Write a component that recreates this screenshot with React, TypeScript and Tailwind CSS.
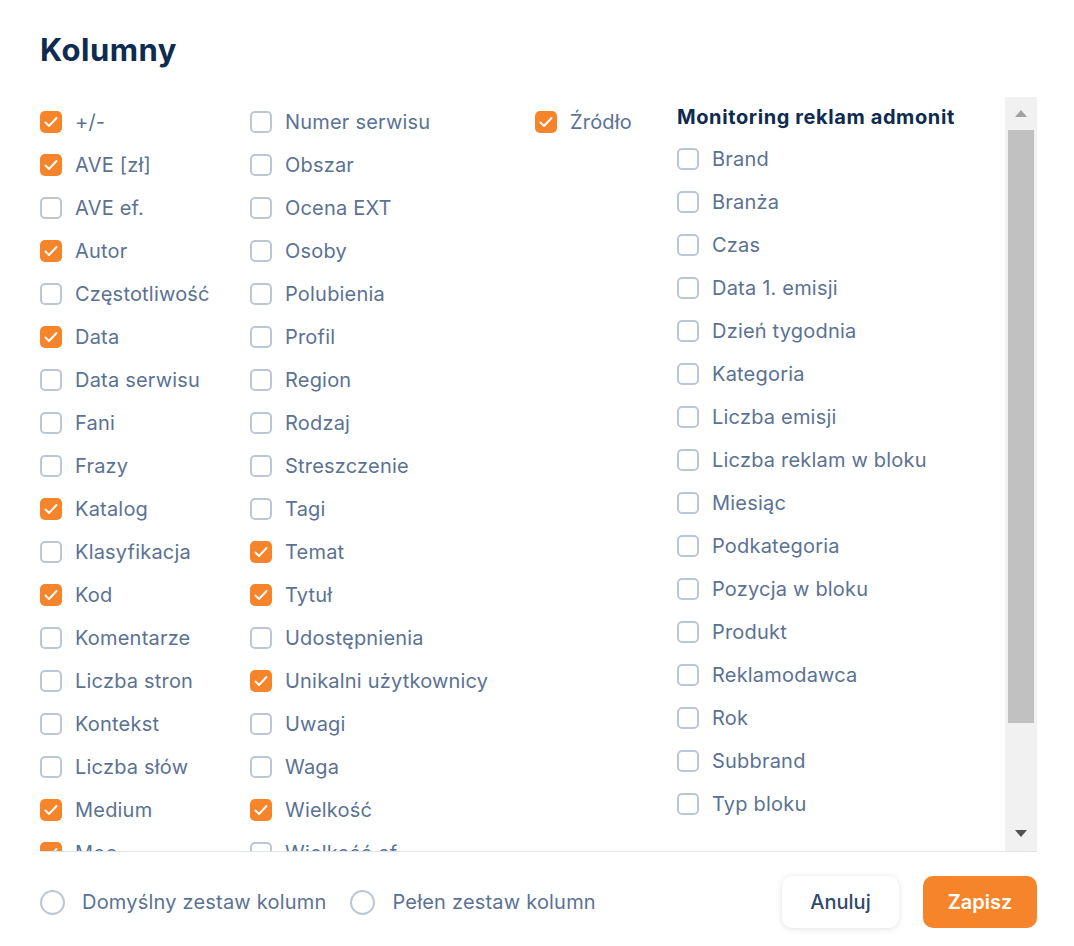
import React from 'react';

type Item = { label: string; checked?: boolean };

const col1: Item[] = [
  { label: '+/-', checked: true },
  { label: 'AVE [zł]', checked: true },
  { label: 'AVE ef.' },
  { label: 'Autor', checked: true },
  { label: 'Częstotliwość' },
  { label: 'Data', checked: true },
  { label: 'Data serwisu' },
  { label: 'Fani' },
  { label: 'Frazy' },
  { label: 'Katalog', checked: true },
  { label: 'Klasyfikacja' },
  { label: 'Kod', checked: true },
  { label: 'Komentarze' },
  { label: 'Liczba stron' },
  { label: 'Kontekst' },
  { label: 'Liczba słów' },
  { label: 'Medium', checked: true },
  { label: 'Moc', checked: true },
  { label: 'Nakład' },
];

const col2: Item[] = [
  { label: 'Numer serwisu' },
  { label: 'Obszar' },
  { label: 'Ocena EXT' },
  { label: 'Osoby' },
  { label: 'Polubienia' },
  { label: 'Profil' },
  { label: 'Region' },
  { label: 'Rodzaj' },
  { label: 'Streszczenie' },
  { label: 'Tagi' },
  { label: 'Temat', checked: true },
  { label: 'Tytuł', checked: true },
  { label: 'Udostępnienia' },
  { label: 'Unikalni użytkownicy', checked: true },
  { label: 'Uwagi' },
  { label: 'Waga' },
  { label: 'Wielkość', checked: true },
  { label: 'Wielkość ef.' },
];

const col3: Item[] = [{ label: 'Źródło', checked: true }];

const col4: Item[] = [
  'Brand',
  'Branża',
  'Czas',
  'Data 1. emisji',
  'Dzień tygodnia',
  'Kategoria',
  'Liczba emisji',
  'Liczba reklam w bloku',
  'Miesiąc',
  'Podkategoria',
  'Pozycja w bloku',
  'Produkt',
  'Reklamodawca',
  'Rok',
  'Subbrand',
  'Typ bloku',
].map((label) => ({ label }));

function Checkbox({ checked }: { checked?: boolean }) {
  if (checked) {
    return (
      <span className="flex h-[22px] w-[22px] shrink-0 items-center justify-center rounded-[5px] bg-[#f5842a]">
        <svg width="16" height="16" viewBox="0 0 16 16" fill="none">
          <polyline points="2.5,8.5 6,12 13.5,4" stroke="white" strokeWidth="1.9" strokeLinecap="round" strokeLinejoin="round" />
        </svg>
      </span>
    );
  }
  return <span className="h-[22px] w-[22px] shrink-0 rounded-[5px] border-2 border-[#bcc7d6] bg-white" />;
}

function Row({ item }: { item: Item }) {
  return (
    <div className="flex h-[43px] items-center gap-[13px]">
      <Checkbox checked={item.checked} />
      <span className="whitespace-nowrap text-[20px] tracking-[0.2px] text-[#5b7292]">{item.label}</span>
    </div>
  );
}

function Scrollbar() {
  return (
    <div className="flex w-[32px] shrink-0 flex-col bg-[#f1f1f1]">
      <div className="flex h-[33px] items-center justify-center">
        <svg width="12" height="7" viewBox="0 0 12 7">
          <polygon points="0,7 6,0 12,7" fill="#a3a3a3" />
        </svg>
      </div>
      <div className="mx-[3px] h-[593px] bg-[#c1c1c1]" />
      <div className="flex-1" />
      <div className="flex h-[36px] items-center justify-center">
        <svg width="12" height="7" viewBox="0 0 12 7">
          <polygon points="0,0 12,0 6,7" fill="#505050" />
        </svg>
      </div>
    </div>
  );
}

function Radio({ label }: { label: string }) {
  return (
    <div className="flex items-center gap-[17px]">
      <span className="h-[25px] w-[25px] shrink-0 rounded-full border-2 border-[#bcc7d6]" />
      <span className="whitespace-nowrap text-[20px] tracking-[0.2px] text-[#5b7292]">{label}</span>
    </div>
  );
}

export default function App() {
  return (
    <div className="h-[946px] w-[1074px] bg-white pl-[40px] pr-[37px] font-['Inter',sans-serif]">
      <h1 className="pt-[31px] pb-[28px] text-[31px] font-bold leading-[38px] tracking-[0.5px] text-[#0e2b50]">Kolumny</h1>
      <div className="flex h-[755px] border-b border-[#e1e5eb]">
        <div className="flex flex-1 overflow-hidden pt-[3px]">
          <div className="w-[210px] shrink-0">
            {col1.map((it) => (
              <Row key={it.label} item={it} />
            ))}
          </div>
          <div className="w-[285px] shrink-0">
            {col2.map((it) => (
              <Row key={it.label} item={it} />
            ))}
          </div>
          <div className="w-[142px] shrink-0">
            {col3.map((it) => (
              <Row key={it.label} item={it} />
            ))}
          </div>
          <div className="-mt-[3px] flex-1">
            <div className="flex h-[40px] items-center whitespace-nowrap text-[20px] font-bold tracking-[0.6px] text-[#0e2b50]">
              Monitoring reklam admonit
            </div>
            {col4.map((it) => (
              <Row key={it.label} item={it} />
            ))}
          </div>
        </div>
        <Scrollbar />
      </div>
      <div className="flex items-center justify-between py-[24px]">
        <div className="flex items-center gap-[24px]">
          <Radio label="Domyślny zestaw kolumn" />
          <Radio label="Pełen zestaw kolumn" />
        </div>
        <div className="flex gap-[24px]">
          <button className="h-[52px] w-[117px] rounded-[10px] bg-white text-[20px] font-medium text-[#2f4a6d] shadow-[0_1px_6px_rgba(0,0,0,0.12)]">
            Anuluj
          </button>
          <button className="h-[52px] w-[114px] rounded-[10px] bg-[#f5842a] text-[20px] font-semibold text-white">
            Zapisz
          </button>
        </div>
      </div>
    </div>
  );
}
